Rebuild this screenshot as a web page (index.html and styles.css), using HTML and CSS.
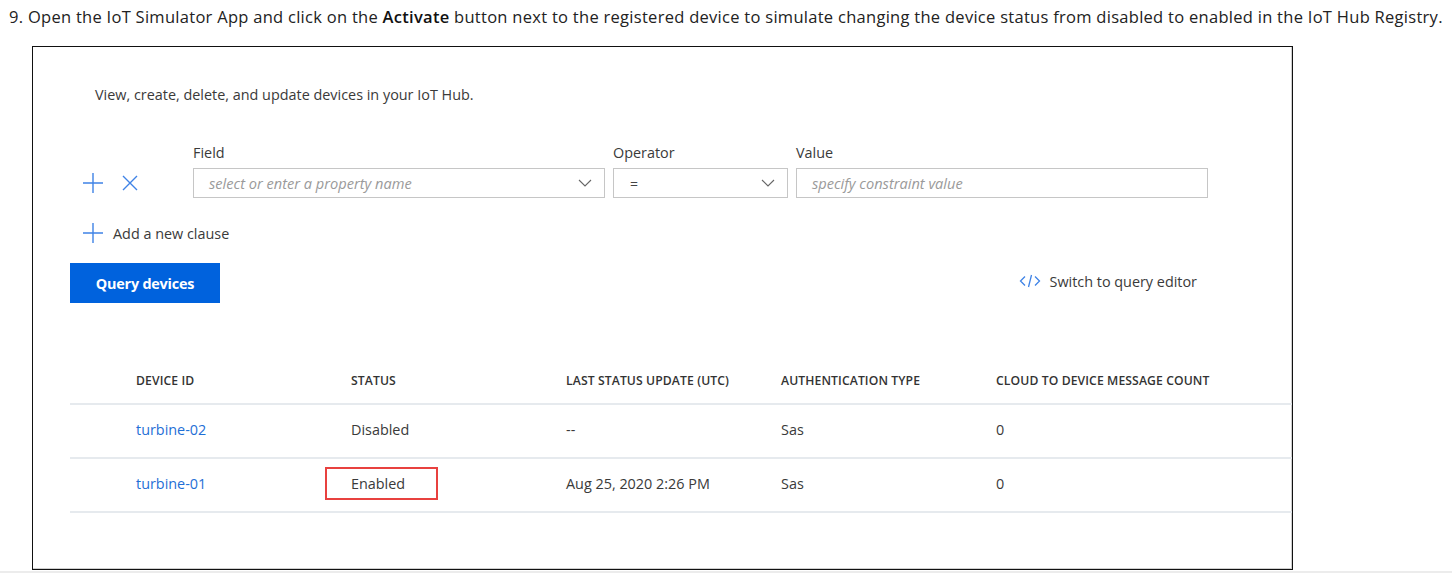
FILE: index.html
```html
<!DOCTYPE html>
<html lang="en">
<head>
<meta charset="utf-8">
<title>IoT Hub devices</title>
<link rel="stylesheet" href="styles.css">
</head>
<body>
<p class="step">9. Open the IoT Simulator App and click on the <b>Activate</b> button next to the registered device to simulate changing the device status from disabled to enabled in the IoT Hub Registry.</p>
<div class="shot">
  <p class="intro">View, create, delete, and update devices in your IoT Hub.</p>

  <div class="clause">
    <div class="clause-icons">
      <svg class="ico-plus" width="22" height="22" viewBox="0 0 22 22"><path d="M11 1V21M1 11H21" stroke="#3f83e6" stroke-width="1.4" fill="none"/></svg>
      <svg class="ico-x" width="16" height="16" viewBox="0 0 16 16"><path d="M1 1L15 15M15 1L1 15" stroke="#3f83e6" stroke-width="1.4" fill="none"/></svg>
    </div>
    <div class="fgroup fgroup-field">
      <label class="flabel">Field</label>
      <div class="finput">
        <span class="placeholder">select or enter a property name</span>
        <svg class="chev" width="14" height="8" viewBox="0 0 14 8"><path d="M1 1L7 7L13 1" stroke="#666" stroke-width="1.1" fill="none"/></svg>
      </div>
    </div>
    <div class="fgroup fgroup-op">
      <label class="flabel">Operator</label>
      <div class="finput">
        <span class="val">=</span>
        <svg class="chev" width="14" height="8" viewBox="0 0 14 8"><path d="M1 1L7 7L13 1" stroke="#666" stroke-width="1.1" fill="none"/></svg>
      </div>
    </div>
    <div class="fgroup fgroup-value">
      <label class="flabel">Value</label>
      <div class="finput">
        <span class="placeholder">specify constraint value</span>
      </div>
    </div>
  </div>

  <div class="add-clause">
    <svg width="22" height="22" viewBox="0 0 22 22"><path d="M11 1V21M1 11H21" stroke="#3f83e6" stroke-width="1.4" fill="none"/></svg>
    <span>Add a new clause</span>
  </div>

  <div class="actions">
    <button class="btn-primary">Query devices</button>
    <a class="switch-link">
      <svg width="22" height="14" viewBox="0 0 22 14"><path d="M6 2.5L1.5 7L6 11.5M16 2.5L20.5 7L16 11.5M12.5 1L9.5 13" stroke="#3f83e6" stroke-width="1.3" fill="none"/></svg>
      <span>Switch to query editor</span>
    </a>
  </div>

  <div class="table">
    <div class="trow thead">
      <div class="cell">DEVICE ID</div>
      <div class="cell">STATUS</div>
      <div class="cell">LAST STATUS UPDATE (UTC)</div>
      <div class="cell">AUTHENTICATION TYPE</div>
      <div class="cell">CLOUD TO DEVICE MESSAGE COUNT</div>
    </div>
    <div class="trow">
      <div class="cell link">turbine-02</div>
      <div class="cell">Disabled</div>
      <div class="cell">--</div>
      <div class="cell">Sas</div>
      <div class="cell">0</div>
    </div>
    <div class="trow">
      <div class="cell link">turbine-01</div>
      <div class="cell"><span class="highlight">Enabled</span></div>
      <div class="cell">Aug 25, 2020 2:26 PM</div>
      <div class="cell">Sas</div>
      <div class="cell">0</div>
    </div>
  </div>
</div>
<div class="bottom-strip"></div>
</body>
</html>
```
FILE: styles.css
```css
html, body {
  margin: 0;
  padding: 0;
  background: #fff;
  overflow: hidden;
}
body {
  font-family: "Open Sans", "Noto Sans", sans-serif;
  color: #333;
  height: 573px;
  position: relative;
}
.step {
  margin: 0;
  padding: 7px 0 0 9px;
  font-size: 16.5px;
  letter-spacing: 0.28px;
  line-height: 20px;
  color: #222;
  white-space: nowrap;
}
.step b {
  font-weight: 600;
  color: #111;
}
.shot {
  margin: 19px 0 0 32px;
  width: 1259px;
  height: 522px;
  border: 1px solid #111;
  box-shadow: inset -1px -1px 0 #cfcfcf;
  font-size: 14.4px;
  color: #3a3a3a;
}
.intro {
  margin: 38px 0 0 62px;
  line-height: 20px;
  font-size: 14.4px;
}
.clause {
  display: flex;
  align-items: flex-end;
  margin: 38px 0 0 49px;
  gap: 8px;
}
.clause-icons {
  width: 103px;
  height: 30px;
  display: flex;
  align-items: center;
  gap: 18px;
  margin-top: 6px;
}
.fgroup {
  display: flex;
  flex-direction: column;
  gap: 5px;
}
.fgroup-field { width: 412px; }
.fgroup-op { width: 175px; }
.fgroup-value { width: 412px; }
.flabel {
  font-size: 14.4px;
  line-height: 20px;
  color: #3a3a3a;
}
.finput {
  height: 30px;
  box-sizing: border-box;
  border: 1px solid #c6c6c6;
  display: flex;
  align-items: center;
  justify-content: space-between;
  padding: 0 12px 0 15px;
}
.placeholder {
  font-style: italic;
  color: #9a9a9a;
  font-size: 14.6px;
}
.val {
  color: #444;
  font-size: 14px;
  padding-left: 1px;
}
.add-clause {
  display: flex;
  align-items: center;
  gap: 9px;
  margin: 24px 0 0 49px;
  height: 22px;
  font-size: 14.4px;
}
.actions {
  display: flex;
  align-items: center;
  justify-content: space-between;
  margin: 19px 0 0 37px;
  width: 1127px;
}
.btn-primary {
  width: 150px;
  height: 40px;
  border: none;
  background: #0062dd;
  color: #fff;
  font-family: "Open Sans", "Noto Sans", sans-serif;
  font-weight: 700;
  font-size: 14.4px;
  letter-spacing: -0.2px;
  padding: 0;
}
.switch-link {
  display: flex;
  align-items: center;
  gap: 8px;
  font-size: 14.4px;
  color: #3a3a3a;
  margin-top: -4px;
}
.table {
  margin: 56px 0 0 37px;
}
.trow {
  display: grid;
  grid-template-columns: 66px 215px 215px 215px 215px 1fr;
  height: 49px;
  padding-bottom: 3px;
  align-items: center;
  border-bottom: 2px solid #e6eaee;
  font-size: 14.4px;
}
.trow .cell:first-child {
  grid-column: 2;
}
.thead {
  height: 43px;
  padding-bottom: 1px;
  font-size: 12.2px;
  font-weight: 600;
  color: #333;
  letter-spacing: 0.1px;
}
.link {
  color: #1f6fd6;
}
.highlight {
  display: inline-block;
  margin-left: -26px;
  padding: 5px 31px 5px 24px;
  border: 2px solid #e8413f;
}
.bottom-strip {
  position: absolute;
  left: 0;
  right: 0;
  bottom: 0;
  height: 2px;
  background: #ececec;
}
```
